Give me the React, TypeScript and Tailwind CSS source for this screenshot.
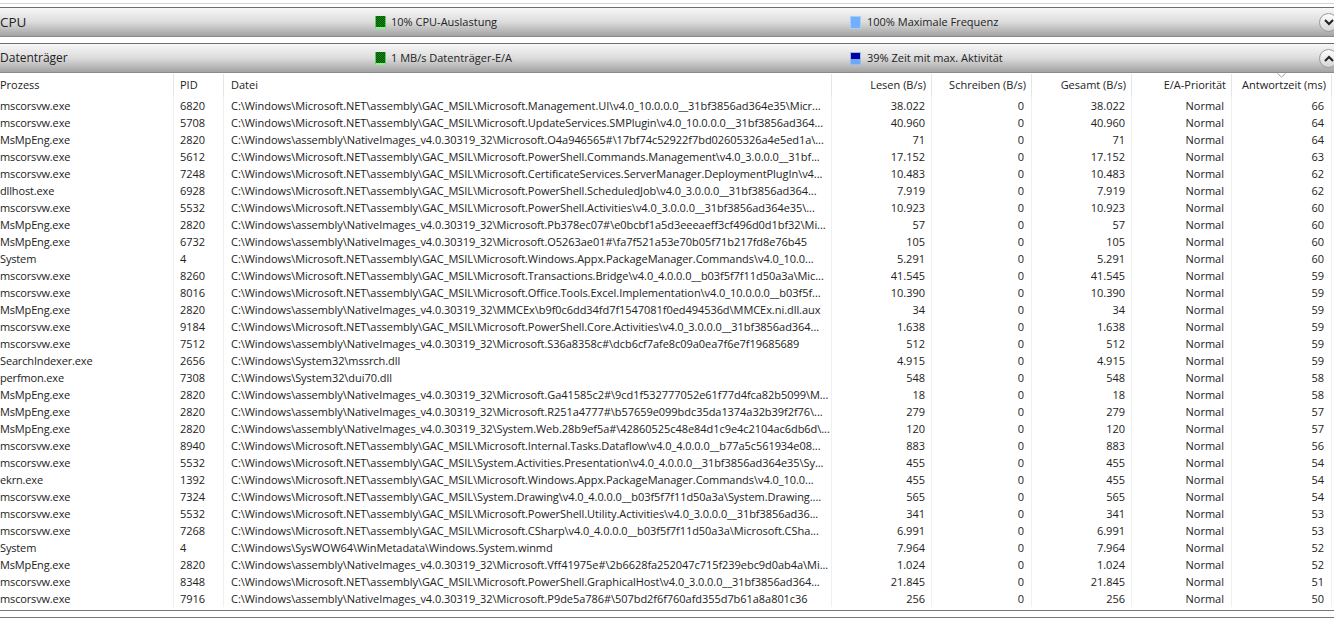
const NET = 'C:\\Windows\\Microsoft.NET\\assembly\\GAC_MSIL\\'
const NI = 'C:\\Windows\\assembly\\NativeImages_v4.0.30319_32\\'

const rows = [
  ['mscorsvw.exe', '6820', NET + 'Microsoft.Management.UI\\v4.0_10.0.0.0__31bf3856ad364e35\\Micr...', '38.022', '0', '38.022', 'Normal', '66'],
  ['mscorsvw.exe', '5708', NET + 'Microsoft.UpdateServices.SMPlugin\\v4.0_10.0.0.0__31bf3856ad364...', '40.960', '0', '40.960', 'Normal', '64'],
  ['MsMpEng.exe', '2820', NI + 'Microsoft.O4a946565#\\17bf74c52922f7bd02605326a4e5ed1a\\...', '71', '0', '71', 'Normal', '64'],
  ['mscorsvw.exe', '5612', NET + 'Microsoft.PowerShell.Commands.Management\\v4.0_3.0.0.0__31bf...', '17.152', '0', '17.152', 'Normal', '63'],
  ['mscorsvw.exe', '7248', NET + 'Microsoft.CertificateServices.ServerManager.DeploymentPlugIn\\v4...', '10.483', '0', '10.483', 'Normal', '62'],
  ['dllhost.exe', '6928', NET + 'Microsoft.PowerShell.ScheduledJob\\v4.0_3.0.0.0__31bf3856ad364...', '7.919', '0', '7.919', 'Normal', '62'],
  ['mscorsvw.exe', '5532', NET + 'Microsoft.PowerShell.Activities\\v4.0_3.0.0.0__31bf3856ad364e35\\...', '10.923', '0', '10.923', 'Normal', '60'],
  ['MsMpEng.exe', '2820', NI + 'Microsoft.Pb378ec07#\\e0bcbf1a5d3eeeaeff3cf496d0d1bf32\\Mi...', '57', '0', '57', 'Normal', '60'],
  ['MsMpEng.exe', '6732', NI + 'Microsoft.O5263ae01#\\fa7f521a53e70b05f71b217fd8e76b45', '105', '0', '105', 'Normal', '60'],
  ['System', '4', NET + 'Microsoft.Windows.Appx.PackageManager.Commands\\v4.0_10.0...', '5.291', '0', '5.291', 'Normal', '60'],
  ['mscorsvw.exe', '8260', NET + 'Microsoft.Transactions.Bridge\\v4.0_4.0.0.0__b03f5f7f11d50a3a\\Mic...', '41.545', '0', '41.545', 'Normal', '59'],
  ['mscorsvw.exe', '8016', NET + 'Microsoft.Office.Tools.Excel.Implementation\\v4.0_10.0.0.0__b03f5f...', '10.390', '0', '10.390', 'Normal', '59'],
  ['MsMpEng.exe', '2820', NI + 'MMCEx\\b9f0c6dd34fd7f1547081f0ed494536d\\MMCEx.ni.dll.aux', '34', '0', '34', 'Normal', '59'],
  ['mscorsvw.exe', '9184', NET + 'Microsoft.PowerShell.Core.Activities\\v4.0_3.0.0.0__31bf3856ad364...', '1.638', '0', '1.638', 'Normal', '59'],
  ['mscorsvw.exe', '7512', NI + 'Microsoft.S36a8358c#\\dcb6cf7afe8c09a0ea7f6e7f19685689', '512', '0', '512', 'Normal', '59'],
  ['SearchIndexer.exe', '2656', 'C:\\Windows\\System32\\mssrch.dll', '4.915', '0', '4.915', 'Normal', '59'],
  ['perfmon.exe', '7308', 'C:\\Windows\\System32\\dui70.dll', '548', '0', '548', 'Normal', '58'],
  ['MsMpEng.exe', '2820', NI + 'Microsoft.Ga41585c2#\\9cd1f532777052e61f77d4fca82b5099\\M...', '18', '0', '18', 'Normal', '58'],
  ['MsMpEng.exe', '2820', NI + 'Microsoft.R251a4777#\\b57659e099bdc35da1374a32b39f2f76\\...', '279', '0', '279', 'Normal', '57'],
  ['MsMpEng.exe', '2820', NI + 'System.Web.28b9ef5a#\\42860525c48e84d1c9e4c2104ac6db6d\\...', '120', '0', '120', 'Normal', '57'],
  ['mscorsvw.exe', '8940', NET + 'Microsoft.Internal.Tasks.Dataflow\\v4.0_4.0.0.0__b77a5c561934e08...', '883', '0', '883', 'Normal', '56'],
  ['mscorsvw.exe', '5532', NET + 'System.Activities.Presentation\\v4.0_4.0.0.0__31bf3856ad364e35\\Sy...', '455', '0', '455', 'Normal', '54'],
  ['ekrn.exe', '1392', NET + 'Microsoft.Windows.Appx.PackageManager.Commands\\v4.0_10.0...', '455', '0', '455', 'Normal', '54'],
  ['mscorsvw.exe', '7324', NET + 'System.Drawing\\v4.0_4.0.0.0__b03f5f7f11d50a3a\\System.Drawing....', '565', '0', '565', 'Normal', '54'],
  ['mscorsvw.exe', '5532', NET + 'Microsoft.PowerShell.Utility.Activities\\v4.0_3.0.0.0__31bf3856ad36...', '341', '0', '341', 'Normal', '53'],
  ['mscorsvw.exe', '7268', NET + 'Microsoft.CSharp\\v4.0_4.0.0.0__b03f5f7f11d50a3a\\Microsoft.CSha...', '6.991', '0', '6.991', 'Normal', '53'],
  ['System', '4', 'C:\\Windows\\SysWOW64\\WinMetadata\\Windows.System.winmd', '7.964', '0', '7.964', 'Normal', '52'],
  ['MsMpEng.exe', '2820', NI + 'Microsoft.Vff41975e#\\2b6628fa252047c715f239ebc9d0ab4a\\Mi...', '1.024', '0', '1.024', 'Normal', '52'],
  ['mscorsvw.exe', '8348', NET + 'Microsoft.PowerShell.GraphicalHost\\v4.0_3.0.0.0__31bf3856ad364...', '21.845', '0', '21.845', 'Normal', '51'],
  ['mscorsvw.exe', '7916', NI + 'Microsoft.P9de5a786#\\507bd2f6f760afd355d7b61a8a801c36', '256', '0', '256', 'Normal', '50'],
]

function Swatch({ kind }: { kind: 'green' | 'light' | 'blue' }) {
  if (kind === 'green') {
    return (
      <span className="block w-[11px] h-[13px] border-b-2 border-b-[#8ff08f] border-x border-x-[#6fc06f] bg-[#0e8e0e] bg-[conic-gradient(#045004_25%,#0e8e0e_0_50%,#045004_0_75%,#0e8e0e_0)] bg-[length:2px_2px]" />
    )
  }
  if (kind === 'light') {
    return <span className="block w-[11px] h-[13px] bg-[#70b0ff] border border-[#a9cdf5]" />
  }
  return (
    <span className="flex flex-col w-[11px] h-[13px] border border-[#9dbbe8]">
      <span className="h-[6px] bg-[#00009e]" />
      <span className="flex-1 bg-[#6aa8fa]" />
    </span>
  )
}

function Section({ title, titleSize, a, b, bKind, open }: { title: string; titleSize: string; a: string; b: string; bKind: 'light' | 'blue'; open?: boolean }) {
  return (
    <div className="flex items-center h-[30px] border-t border-t-[#6e6e6e] border-b border-b-[#8a8a8a] bg-gradient-to-b from-[#f7f7f7] via-[#dcdcdc] to-[#a3a3a3]">
      <div className={`w-[375px] ${titleSize} text-[#222]`}>{title}</div>
      <div className="w-[475px] flex items-center gap-[5px] text-[11px] text-[#222]">
        <Swatch kind="green" />
        {a}
      </div>
      <div className="flex-1 flex items-center gap-[6px] text-[11px] text-[#222]">
        <Swatch kind={bKind} />
        {b}
      </div>
      <div className="w-[15px] h-[19px] overflow-hidden">
        <div className="w-[19px] h-[19px] rounded-full border border-[#9a9a9a] bg-gradient-to-b from-white to-[#d4d4d4] flex items-center justify-center">
          <svg width="10" height="7" viewBox="0 0 10 7" fill="none" stroke="#222" strokeWidth="2">
            <path d={open ? 'M1 6 L5 2 L9 6' : 'M1 1 L5 5 L9 1'} />
          </svg>
        </div>
      </div>
    </div>
  )
}

const cols = 'grid grid-cols-[174px_50px_608px_100px_100px_100px_100px_100px]'
const headers = ['Prozess', 'PID', 'Datei', 'Lesen (B/s)', 'Schreiben (B/s)', 'Gesamt (B/s)', 'E/A-Priorität', 'Antwortzeit (ms)']

// right padding differs a bit per numeric column in the original
const cellPad = ['tracking-[-0.15px]', 'pl-[6px]', 'pl-[7px] tracking-[-0.05px]', 'text-right pr-[6px]', 'text-right pr-[7px]', 'text-right pr-[6px]', 'text-right pr-[7px]', 'text-right pr-[7px]']

export default function App() {
  return (
    <div className="w-[1334px] h-[619px] overflow-hidden bg-white pt-[3px] font-['Open_Sans','Noto_Sans',sans-serif] text-[#222]">
      <div className="h-[1px] bg-[#d4d4d4]" />
      <div className="mt-[3px]">
        <Section title="CPU" titleSize="text-[13.5px]" a="10% CPU-Auslastung" b="100% Maximale Frequenz" bKind="light" />
      </div>
      <div className="mt-[6px]">
        <Section title="Datenträger" titleSize="text-[12px]" a="1 MB/s Datenträger-E/A" b="39% Zeit mit max. Aktivität" bKind="blue" open />
      </div>
      <div className={`${cols} h-[24px] pt-[1px] text-[11px] relative`}>
        {headers.map((h, i) => (
          <div key={h} className={`flex items-center border-r border-r-[#e5e5e5] ${i < 3 ? 'justify-start' : 'justify-end pr-[5px]'} ${i === 0 ? '' : i === 1 ? 'pl-[6px]' : i === 2 ? 'pl-[7px]' : ''}`}>
            {h}
          </div>
        ))}
        <svg className="absolute left-[1277px] top-0" width="9" height="5" viewBox="0 0 9 5" fill="none" stroke="#a0a0a0">
          <path d="M0.5 0.5 L4.5 4 L8.5 0.5" />
        </svg>
      </div>
      <div>
        {rows.map((r, ri) => (
          <div key={ri} className={`${cols} h-[17px] text-[11px] leading-[17px]`}>
            {r.map((c, i) => (
              <div key={i} className={`border-r border-r-[#f0f0f0] whitespace-nowrap ${cellPad[i]}`}>
                {c}
              </div>
            ))}
          </div>
        ))}
      </div>
      <div className="mt-[3px] h-[1px] bg-[#777]" />
      <div className="mt-[6px] h-[1px] bg-[#777]" />
    </div>
  )
}
